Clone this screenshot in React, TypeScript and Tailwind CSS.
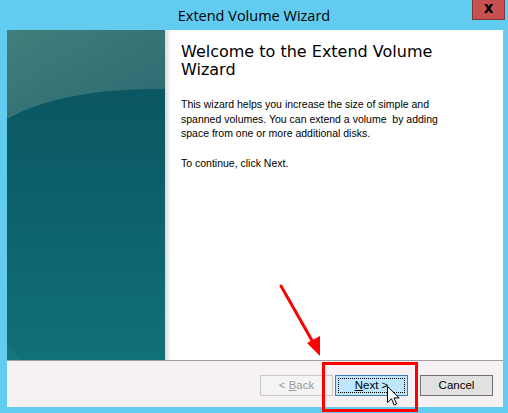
import React from "react";

// Decorative teal banner on the left side of the wizard page
function WizardBanner() {
  return (
    <div className="relative h-full w-[158px] shrink-0 overflow-hidden bg-[#0f6a74]">
      <svg width="158" height="330" viewBox="0 0 158 330" className="absolute inset-0">
        <defs>
          <linearGradient id="upper" x1="0" y1="0" x2="1" y2="1">
            <stop offset="0" stopColor="#417e7d" />
            <stop offset="1" stopColor="#2a6a70" />
          </linearGradient>
          <linearGradient id="lower" x1="0" y1="0" x2="0" y2="1">
            <stop offset="0" stopColor="#0a535e" />
            <stop offset="0.5" stopColor="#0c5f6b" />
            <stop offset="1" stopColor="#117178" />
          </linearGradient>
        </defs>
        <rect width="158" height="330" fill="url(#lower)" />
        <path d="M0 0 H158 V59 C100 58 40 66 0 89 Z" fill="url(#upper)" />
        <path d="M0 314 C6 318 10 324 14 330 H0 Z" fill="#1a7a80" opacity="0.6" />
      </svg>
    </div>
  );
}

function MouseCursor() {
  return (
    <svg width="13" height="20" viewBox="0 0 13 20" className="absolute left-[387px] top-[386px]">
      <path
        d="M0.5 0.5 V16.5 L4.5 12.8 L7.2 19 L9.6 18 L7 11.9 H12.2 Z"
        fill="#fff"
        stroke="#000"
        strokeWidth="1"
        strokeLinejoin="miter"
      />
    </svg>
  );
}

function PointerArrow() {
  return (
    <svg width="508" height="413" className="pointer-events-none absolute left-0 top-0">
      <line x1="281" y1="286" x2="314" y2="344" stroke="#ff0000" strokeWidth="3" strokeLinecap="round" />
      <path d="M320 356 L307 343 L320 336 Z" fill="#ff0000" />
    </svg>
  );
}

type BtnProps = { label: React.ReactNode; variant: "disabled" | "default" | "normal" };

function WizardButton({ label, variant }: BtnProps) {
  const styles = {
    disabled: "border-[#c8c8c8] bg-[#f4f4f4] text-[#9a9a9a]",
    default: "border-[#3c7fb1] bg-[#bee6fd] text-black",
    normal: "border-[#707070] bg-[#e1e1e1] text-black",
  }[variant];
  return (
    <div
      className={`relative flex h-[21px] w-[73px] items-center justify-center border text-[11.5px] leading-none ${styles}`}
    >
      {variant === "default" && (
        <span className="absolute inset-[2px] border border-dotted border-black" />
      )}
      <span className="relative">{label}</span>
    </div>
  );
}

export default function App() {
  return (
    <div className="relative h-[413px] w-[508px] overflow-hidden bg-[#62cbf0] font-['Liberation_Sans',Arial,sans-serif]">
      {/* title bar */}
      <div className="relative flex h-[30px] items-center justify-center">
        <span className="pt-[1px] font-['Open_Sans',sans-serif] text-[14.5px] text-black">
          Extend Volume Wizard
        </span>
        <div className="absolute right-[3px] top-0 flex h-[20px] w-[33px] items-center justify-center border border-t-0 border-[#7d3a3a] bg-[#c75050]">
          <span className="mt-[-3px] font-['DejaVu_Sans',sans-serif] text-[15px] font-bold leading-none text-black">x</span>
        </div>
      </div>

      {/* window body */}
      <div className="ml-[7px] mr-[5px] flex flex-col">
        <div className="flex h-[330px] bg-white">
          <WizardBanner />
          <div className="h-full w-[6px] shrink-0 bg-gradient-to-r from-[#d8d8d8] to-white" />
          <div className="flex flex-col pl-[10px] pt-[13px]">
            <h1 className="font-['DejaVu_Sans',Verdana,sans-serif] text-[16px] leading-[18px] font-normal text-black">
              Welcome to the Extend Volume
              <br />
              Wizard
            </h1>
            <p className="mt-[18px] text-[10.5px] leading-[14.5px] text-black">
              This wizard helps you increase the size of simple and
              <br />
              spanned volumes. You can extend a volume&nbsp; by adding
              <br />
              space from one or more additional disks.
            </p>
            <p className="mt-[15px] text-[10.5px] leading-[14.5px] text-black">To continue, click Next.</p>
          </div>
        </div>
        <div className="h-px bg-[#a0a0a0]" />
        <div className="flex h-[46px] items-start justify-end bg-[#f5f1f5] pr-[10px] pt-[14px]">
          <WizardButton
            variant="disabled"
            label={
              <>
                &lt; <span className="underline">B</span>ack
              </>
            }
          />
          <div className="ml-[2px]">
            <WizardButton
              variant="default"
              label={
                <>
                  <span className="underline">N</span>ext &gt;
                </>
              }
            />
          </div>
          <div className="ml-[12px]">
            <WizardButton variant="normal" label="Cancel" />
          </div>
        </div>
      </div>

      {/* annotation: highlight around the Next button */}
      <div className="absolute left-[322px] top-[362px] h-[50px] w-[96px] border-[3px] border-[#ff0000]" />
      <PointerArrow />
      <MouseCursor />
    </div>
  );
}
